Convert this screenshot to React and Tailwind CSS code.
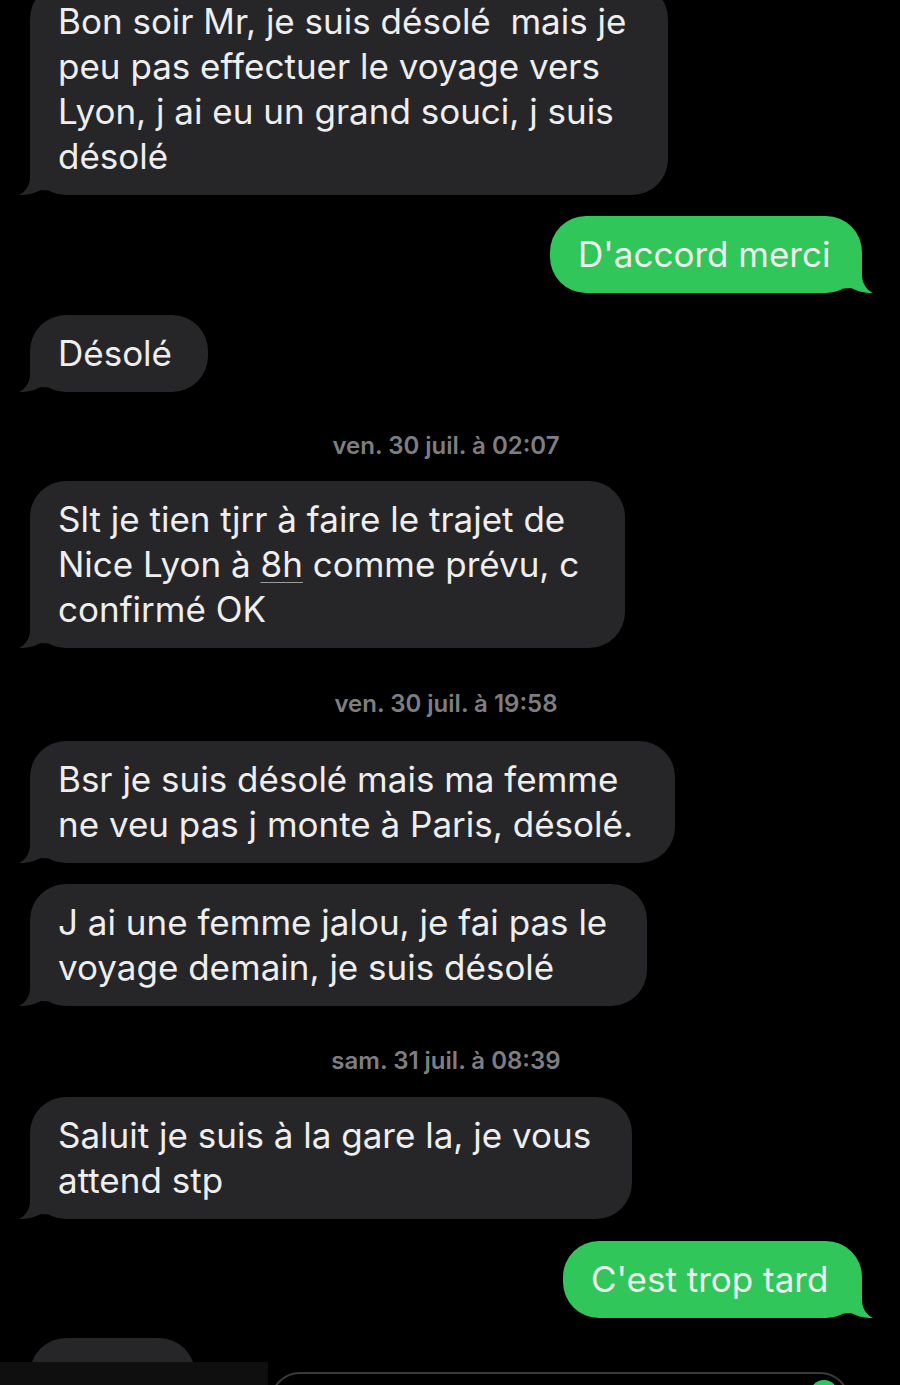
import React from 'react';

const GRAY = 'bg-[#262628]';
const GREEN = 'bg-[#31c65a]';

const Tail = ({ side, color }) => (
  <svg
    viewBox="0 0 30 38"
    className={
      side === 'in'
        ? 'absolute left-[-11px] bottom-0 w-[30px] h-[38px]'
        : 'absolute right-[-11px] bottom-0 w-[30px] h-[38px] -scale-x-100'
    }
  >
    <path d="M11 0 L11 20 C11 29 6 35 0 38 C9 38 16 36 22 33 L30 33.5 L30 0 Z" fill={color} />
  </svg>
);

const Bubble = ({ side = 'in', width, className = '', children }) => {
  const isIn = side === 'in';
  return (
    <div className={`flex ${isIn ? 'justify-start pl-[30px]' : 'justify-end pr-[38px]'} ${className}`}>
      <div
        className={`relative rounded-[36px] py-4 px-7 text-[35px] leading-[45px] text-[#eeeeee] ${isIn ? GRAY : GREEN}`}
        style={{ width }}
      >
        <Tail side={side} color={isIn ? '#262628' : '#31c65a'} />
        <div className="relative whitespace-nowrap">{children}</div>
      </div>
    </div>
  );
};

const Stamp = ({ children, className = '' }) => (
  <div className={`h-6 pr-2 text-center text-[24px] leading-6 font-semibold text-[#7e7e82] ${className}`}>
    {children}
  </div>
);

export default function App() {
  return (
    <div
      className="relative h-[1385px] w-[900px] overflow-hidden bg-black"
      style={{ fontFamily: 'Inter, "Liberation Sans", sans-serif' }}
    >
      <div className="flex flex-col">
        <Bubble width={638} className="-mt-[17px]">
          Bon soir Mr, je suis désolé&nbsp; mais je<br />
          peu pas effectuer le voyage vers<br />
          Lyon, j ai eu un grand souci, j suis<br />
          désolé
        </Bubble>
        <Bubble side="out" width={312} className="mt-[21px]">
          D'accord merci
        </Bubble>
        <Bubble width={178} className="mt-[22px]">
          Désolé
        </Bubble>

        <Stamp className="mt-[42px]">ven. 30 juil. à 02:07</Stamp>

        <Bubble width={595} className="mt-[23px]">
          Slt je tien tjrr à faire le trajet de<br />
          Nice Lyon à{' '}
          <span className="underline decoration-[#9c9c9c] decoration-1 underline-offset-[5px]">8h</span> comme
          prévu, c<br />
          confirmé OK
        </Bubble>

        <Stamp className="mt-[44px]">ven. 30 juil. à 19:58</Stamp>

        <Bubble width={645} className="mt-[25px]">
          Bsr je suis désolé mais ma femme<br />
          ne veu pas j monte à Paris, désolé.
        </Bubble>
        <Bubble width={617} className="mt-[21px]">
          J ai une femme jalou, je fai pas le<br />
          voyage demain, je suis désolé
        </Bubble>

        <Stamp className="mt-[43px]">sam. 31 juil. à 08:39</Stamp>

        <Bubble width={602} className="mt-[24px]">
          Saluit je suis à la gare la, je vous<br />
          attend stp
        </Bubble>
        <Bubble side="out" width={299} className="mt-[22px]">
          C'est trop tard
        </Bubble>
        <Bubble width={165} className="mt-[20px]">
          &nbsp;
        </Bubble>
      </div>

      {/* compose bar, lies over the last message */}
      <div className="absolute bottom-0 left-0 right-0 h-[23px] flex">
        <div className="w-[268px] h-full bg-[#0f0f10]" />
        <div className="relative flex-1 bg-black">
          <div className="absolute left-[2px] right-[50px] top-[10px] h-[60px] rounded-[30px] border-2 border-[#3a3a3c]" />
          <div className="absolute right-[62px] top-[18px] w-[28px] h-[28px] rounded-full bg-[#31c65a]" />
        </div>
      </div>
    </div>
  );
}
